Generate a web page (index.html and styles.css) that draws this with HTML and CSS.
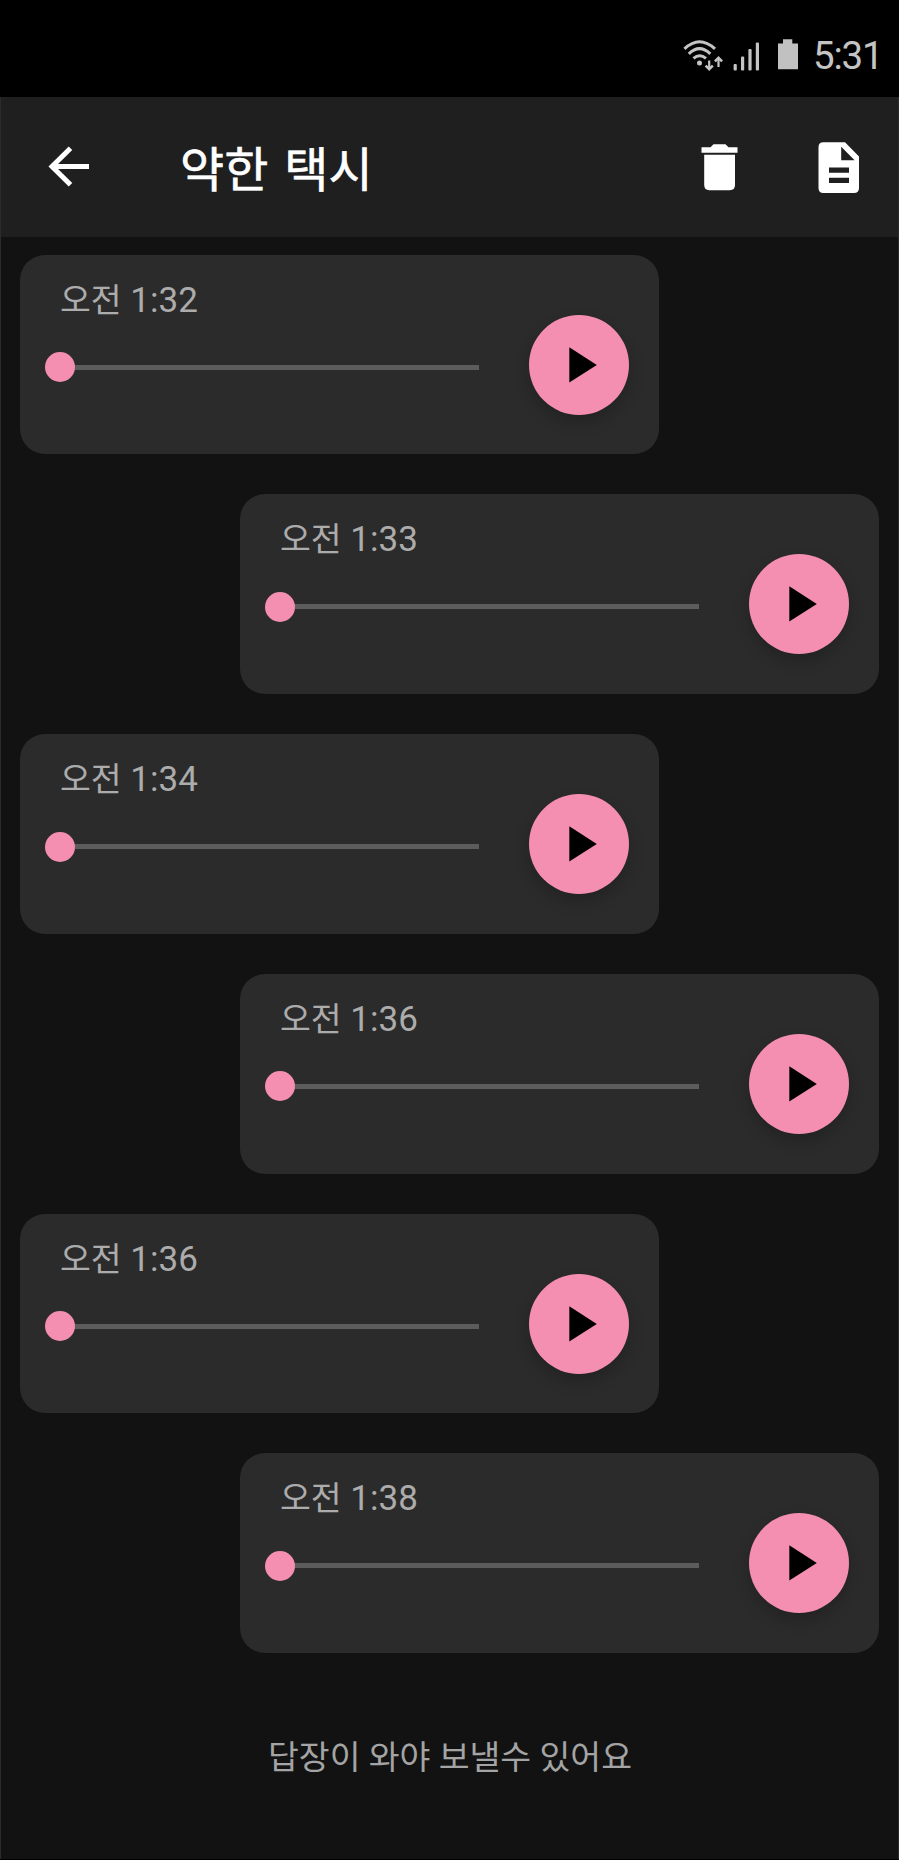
FILE: index.html
```html
<!DOCTYPE html>
<html lang="ko">
<head>
<meta charset="utf-8">
<title>약한 택시</title>
<link rel="stylesheet" href="styles.css">
</head>
<body>
<div class="status">
  <svg class="wifi" width="42" height="34" viewBox="0 0 42 34" fill="none" stroke="#c4c4c4" stroke-width="3">
    <path d="M1.4 9.8Q16.5-4.4 32 9.8M5.8 14.8Q16.5 4.6 27.3 14.8M10.5 19.4Q16.5 14 23 19.4"/>
    <circle cx="16.5" cy="24" r="2.5" fill="#c4c4c4" stroke="none"/>
    <path stroke-width="2.2" d="M26.2 21.4V29.5M35.5 28V19.5"/>
    <path stroke-width="2.5" d="M22.6 26.6 26.2 30.2 29.8 26.6M31.9 22.4 35.5 18.8 39.1 22.4"/>
  </svg>
  <svg class="signal" width="28" height="30" viewBox="0 0 28 30" fill="#c4c4c4">
    <rect x="0.6" y="22" width="3.2" height="6.6" rx="1"/><rect x="8" y="14.5" width="3.2" height="14.1" rx="1"/><rect x="15.4" y="7" width="3.2" height="21.6" rx="1"/><rect x="22.8" y="0.5" width="3.2" height="28.1" rx="1"/>
  </svg>
  <svg class="battery" width="20" height="31" viewBox="0 0 20 31" fill="#c1c1c1"><path d="M5 0.3H14.3V4.5H20V30.2H0V4.5H5Z"/></svg>
  <span class="clock">5:31</span>
</div>
<div class="screen">
  <header class="bar">
    <svg class="back" width="42" height="42" viewBox="0 0 42 42" fill="none" stroke="#fff" stroke-width="5"><path d="M41 20.5H5M22.5 2.2 4 20.5 22.5 38.8"/></svg>
    <h1 class="title">약한 택시</h1>
    <svg class="trash" width="37" height="47" viewBox="0 0 37 47" fill="#fff"><path d="M0.5 3.2H9.5L12.5.3H24.5L27.5 3.2H36.5V8.8H.5ZM3.2 10.8H34V41Q34 46.2 28.8 46.2H8.4Q3.2 46.2 3.2 41Z"/></svg>
    <svg class="doc" width="42" height="52" viewBox="0 0 42 52" fill="#fff" fill-rule="evenodd"><path d="M5.3.3H27L41 14.6V46Q41 51 36 51H5.3Q.5 51 .5 46V5.3Q.5.3 5.3.3ZM23.2 4.8V18.2H36.6ZM11 25.5V30.8H31V25.5ZM11 35.8V41H31V35.8Z"/></svg>
  </header>
  <main class="list">
    <section class="card"><div class="info"><p class="time"><span class="ampm">오전</span> 1:32</p><div class="track"><i class="thumb"></i></div></div><button class="play" aria-label="재생"><svg width="28" height="36" viewBox="0 0 28 36"><path d="M.3.3 27.8 18 .3 35.6Z"/></svg></button></section>
    <section class="card sent"><div class="info"><p class="time"><span class="ampm">오전</span> 1:33</p><div class="track"><i class="thumb"></i></div></div><button class="play" aria-label="재생"><svg width="28" height="36" viewBox="0 0 28 36"><path d="M.3.3 27.8 18 .3 35.6Z"/></svg></button></section>
    <section class="card"><div class="info"><p class="time"><span class="ampm">오전</span> 1:34</p><div class="track"><i class="thumb"></i></div></div><button class="play" aria-label="재생"><svg width="28" height="36" viewBox="0 0 28 36"><path d="M.3.3 27.8 18 .3 35.6Z"/></svg></button></section>
    <section class="card sent"><div class="info"><p class="time"><span class="ampm">오전</span> 1:36</p><div class="track"><i class="thumb"></i></div></div><button class="play" aria-label="재생"><svg width="28" height="36" viewBox="0 0 28 36"><path d="M.3.3 27.8 18 .3 35.6Z"/></svg></button></section>
    <section class="card"><div class="info"><p class="time"><span class="ampm">오전</span> 1:36</p><div class="track"><i class="thumb"></i></div></div><button class="play" aria-label="재생"><svg width="28" height="36" viewBox="0 0 28 36"><path d="M.3.3 27.8 18 .3 35.6Z"/></svg></button></section>
    <section class="card sent"><div class="info"><p class="time"><span class="ampm">오전</span> 1:38</p><div class="track"><i class="thumb"></i></div></div><button class="play" aria-label="재생"><svg width="28" height="36" viewBox="0 0 28 36"><path d="M.3.3 27.8 18 .3 35.6Z"/></svg></button></section>
  </main>
  <footer class="note">답장이 와야 보낼수 있어요</footer>
</div>
</body>
</html>
```
FILE: styles.css
```css
* { box-sizing: border-box; margin: 0; padding: 0; }
body {
  width: 899px;
  height: 1860px;
  background: #000;
  font-family: Roboto, "Noto Sans CJK KR", sans-serif;
  overflow: hidden;
}
svg { display: block; flex: none; }
.status {
  height: 97px;
  display: flex;
  align-items: flex-start;
  padding: 39px 0 0 683px;
}
.signal { margin: 3px 0 0 8px; }
.battery { margin-left: 17px; }
.clock {
  margin: -5px 0 0 15px;
  font-size: 38.5px;
  line-height: 44px;
  letter-spacing: -1.2px;
  color: #c4c4c4;
}
.screen {
  height: 1762px;
  background: #121212;
  border-left: 1px solid #2b2b2b;
  border-right: 1px solid #2b2b2b;
}
.bar {
  height: 140px;
  display: flex;
  align-items: flex-start;
  background: #1f1f1f;
  padding: 44px 38px 0 47px;
}
.back { margin-top: 5px; }
.title {
  flex: 1;
  margin: -5px 0 0 90px;
  font-size: 48px;
  font-weight: 400;
  line-height: 70px;
  word-spacing: 4px;
  -webkit-text-stroke: 0.6px #fff;
  color: #fff;
  white-space: nowrap;
}
.trash { margin: 3px 80px 0 0; }
.doc { margin-top: 1px; }
.list {
  display: flex;
  flex-direction: column;
  gap: 40px;
  padding: 17.5px 19px 0;
}
.card {
  width: 639px;
  height: 199.8px;
  flex: none;
  display: flex;
  border-radius: 25px;
  background: #2b2b2b;
}
.sent { align-self: flex-end; }
.info { width: 459px; padding: 21px 0 0 40px; }
.time {
  height: 50px;
  font-size: 35px;
  line-height: 50px;
  color: #acacac;
  white-space: nowrap;
}
.ampm { font-size: 33.5px; }
.track {
  display: flex;
  align-items: center;
  height: 5px;
  margin-top: 39px;
  background: #5c5c5c;
}
.thumb {
  width: 30px;
  height: 30px;
  flex: none;
  margin-left: -15px;
  border-radius: 50%;
  background: #f48fb1;
}
.play {
  width: 100px;
  height: 100px;
  margin: 60px 0 0 50px;
  padding: 0 0 0 40px;
  border: 0;
  border-radius: 50%;
  background: #f48fb1;
  box-shadow: 0 7px 16px rgba(0, 0, 0, .2);
}
.note {
  padding: 75px 0 0 1px;
  font-size: 33.5px;
  line-height: 60px;
  text-align: center;
  color: #a4a4a4;
}
```
